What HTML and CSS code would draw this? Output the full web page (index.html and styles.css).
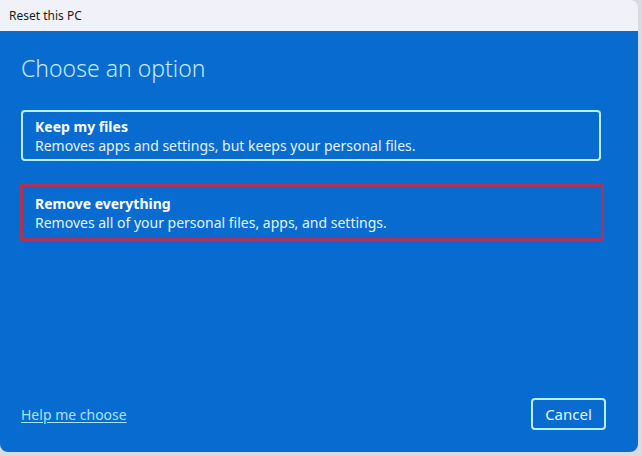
FILE: index.html
```html
<!DOCTYPE html>
<html>
<head>
<meta charset="utf-8">
<link rel="stylesheet" href="styles.css">
</head>
<body>
<div class="window">
  <div class="titlebar">Reset this PC</div>
  <div class="content">
    <h1 class="heading">Choose an option</h1>
    <div class="options">
      <div class="card card-keep">
        <div class="card-title">Keep my files</div>
        <div class="card-desc">Removes apps and settings, but keeps your personal files.</div>
      </div>
      <div class="card card-remove">
        <div class="card-title">Remove everything</div>
        <div class="card-desc">Removes all of your personal files, apps, and settings.</div>
      </div>
    </div>
    <div class="footer">
      <a class="help" href="#">Help me choose</a>
      <button class="cancel">Cancel</button>
    </div>
  </div>
</div>
</body>
</html>
```

FILE: styles.css
```css
html, body {
  margin: 0;
  padding: 0;
  background: #d9dbe0;
  width: 642px;
  height: 456px;
  overflow: hidden;
}
.window {
  width: 638px;
  height: 452px;
  display: flex;
  flex-direction: column;
  border-radius: 0 8px 8px 8px;
  overflow: hidden;
  font-family: "Noto Sans", "Open Sans", sans-serif;
}
.titlebar {
  height: 31px;
  flex: none;
  background: #f1f2f9;
  color: #1a1a1a;
  font-size: 12px;
  padding-left: 9px;
  line-height: 31px;
  box-sizing: border-box;
}
.content {
  flex: 1;
  background: #086bd0;
  display: flex;
  flex-direction: column;
  padding: 0 32px 22px 20px;
}
.heading {
  margin: 20px 0 0 1px;
  font-weight: 300;
  font-size: 23px;
  line-height: 34px;
  color: #c2eaff;
}
.options {
  display: flex;
  flex-direction: column;
  gap: 23px;
  margin-top: 25px;
}
.card {
  box-sizing: border-box;
  border-radius: 4px;
  color: #fff;
  font-size: 14px;
}
.card-keep {
  margin-left: 1px;
  width: 580px;
  height: 51px;
  border: 2px solid #b7f0ff;
  padding: 6px 12px;
}
.card-remove {
  width: 584px;
  height: 57px;
  border: 3px solid #a8365a;
  border-radius: 1px;
  padding: 8px 12px;
}
.card-title {
  font-weight: 700;
  line-height: 18px;
}
.card-desc {
  line-height: 20px;
  color: #e3f5ff;
}
.footer {
  margin-top: auto;
  display: flex;
  align-items: center;
  justify-content: space-between;
  padding-left: 1px;
}
.help {
  color: #a9e2ff;
  font-size: 14px;
  text-decoration: underline;
  text-underline-offset: 2px;
}
.cancel {
  width: 75px;
  height: 32px;
  box-sizing: border-box;
  background: transparent;
  border: 2px solid #b7f0ff;
  border-radius: 4px;
  color: #e7f7ff;
  font-family: "Noto Sans", "Open Sans", sans-serif;
  font-size: 15px;
  padding: 0;
}
```
